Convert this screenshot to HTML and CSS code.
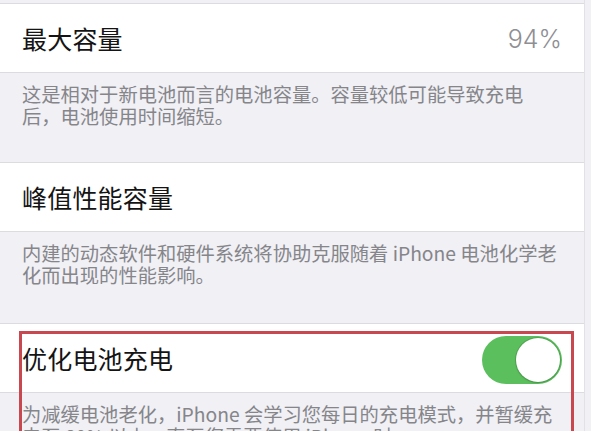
FILE: index.html
```html
<!DOCTYPE html>
<html lang="zh-CN">
<head>
<meta charset="utf-8">
<title>电池健康</title>
<link rel="stylesheet" href="styles.css">
</head>
<body>
<div class="page">
  <div class="list">
    <div class="strip"></div>
    <div class="cell">
      <span class="title">最大容量</span>
      <span class="value">94%</span>
    </div>
    <div class="footer f1">这是相对于新电池而言的电池容量。容量较低可能导致充电后，电池使用时间缩短。</div>
    <div class="cell">
      <span class="title">峰值性能容量</span>
    </div>
    <div class="footer f2">内建的动态软件和硬件系统将协助克服随着 iPhone 电池化学老化而出现的性能影响。</div>
    <div class="cell">
      <span class="title">优化电池充电</span>
      <span class="toggle"><span class="knob"></span></span>
    </div>
    <div class="footer f3">为减缓电池老化，iPhone 会学习您每日的充电模式，并暂缓充电至 80% 以上，直至您需要使用 iPhone 时。</div>
  </div>
  <div class="highlight"></div>
</div>
</body>
</html>
```
FILE: styles.css
```css
html, body {
  margin: 0;
  padding: 0;
  background: #f0f0f5;
  overflow: hidden;
}
body {
  width: 591px;
  height: 431px;
  font-family: "Noto Sans CJK SC", "Noto Sans", sans-serif;
}
.page {
  position: relative;
  width: 591px;
  height: 431px;
  overflow: hidden;
}
.list {
  width: 584px;
  border-right: 1px solid #e2e2e6;
  display: flex;
  flex-direction: column;
}
.strip {
  height: 3px;
  background: #f0f0f5;
}
.cell {
  height: 68px;
  background: #ffffff;
  border-top: 1px solid #dcdce0;
  border-bottom: 1px solid #dcdce0;
  padding: 0 22px 0 22px;
  display: flex;
  align-items: center;
  justify-content: space-between;
  box-sizing: content-box;
}
.title {
  font-size: 25px;
  color: #141414;
  letter-spacing: 0.2px;
}
.value {
  font-family: "Inter", "Noto Sans", sans-serif;
  font-size: 25px;
  color: #8e8e93;
  font-weight: 300;
  padding-top: 2px;
}
.footer {
  background: #f0f0f5;
  padding: 10px 27px 0 22px;
  font-size: 19.3px;
  line-height: 22px;
  color: #85858a;
  box-sizing: border-box;
}
.f1 { height: 89px; }
.f2 { height: 91px; }
.f3 { height: 60px; }
.toggle {
  width: 80px;
  height: 48px;
  border-radius: 24px;
  background: #5bbf5d;
  display: flex;
  align-items: center;
  justify-content: flex-end;
  padding-right: 2px;
  box-sizing: border-box;
  margin-top: 4px;
}
.knob {
  width: 44px;
  height: 44px;
  border-radius: 50%;
  background: #ffffff;
  box-shadow: 0 0 0 1px rgba(60, 120, 60, 0.35), 0 1px 2px rgba(0, 0, 0, 0.15);
}
.highlight {
  position: absolute;
  left: 19px;
  top: 331px;
  width: 549px;
  height: 120px;
  border: 3px solid #c9474f;
}
```
